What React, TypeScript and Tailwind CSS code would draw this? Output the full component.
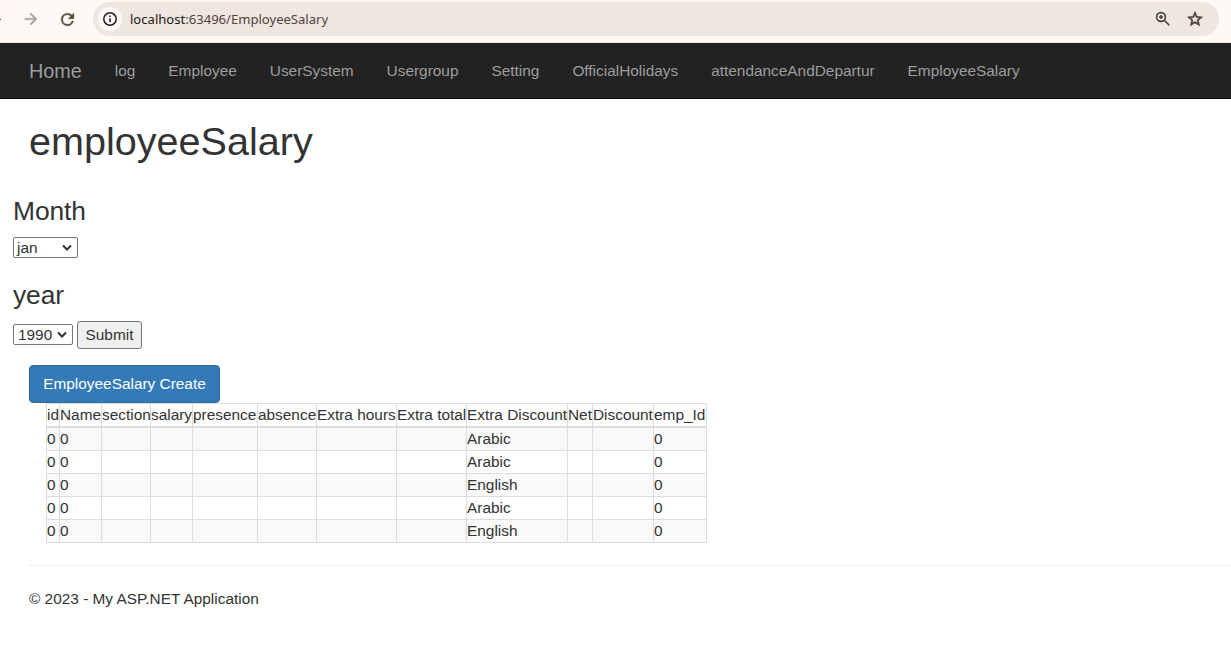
import React from 'react';

const navItems = [
  'log',
  'Employee',
  'UserSystem',
  'Usergroup',
  'Setting',
  'OfficialHolidays',
  'attendanceAndDepartur',
  'EmployeeSalary',
];

const columns = [
  { name: 'id', width: 13 },
  { name: 'Name', width: 42 },
  { name: 'section', width: 49 },
  { name: 'salary', width: 42 },
  { name: 'presence', width: 65 },
  { name: 'absence', width: 59 },
  { name: 'Extra hours', width: 80 },
  { name: 'Extra total', width: 70 },
  { name: 'Extra Discount', width: 101 },
  { name: 'Net', width: 25 },
  { name: 'Discount', width: 61 },
  { name: 'emp_Id', width: 53 },
];

const sections = ['Arabic', 'Arabic', 'English', 'Arabic', 'English'];
const rows = sections.map((s) => ['0', '0', '', '', '', '', '', '', s, '', '', '0']);

function BrowserBar() {
  return (
    <div className="flex h-[43px] items-start border-b border-[#efe3cb] bg-[#fff8f5] pt-[2px]">
      <div className="flex h-[34px] w-[93px] shrink-0 items-center">
        <div className="h-px w-px bg-[#4d3a28]" />
        <svg className="ml-[21px] h-[18px] w-[18px]" viewBox="0 0 24 24" fill="#aaa5a2">
          <path stroke="#aaa5a2" strokeWidth=".8" d="m12 4-1.41 1.41L16.17 11H4v2h12.17l-5.58 5.59L12 20l8-8z" />
        </svg>
        <svg className="ml-[18px] h-[19px] w-[19px]" viewBox="0 0 24 24" fill="#54432f">
          <path stroke="#54432f" strokeWidth=".5" d="M17.65 6.35A7.95 7.95 0 0 0 12 4a8 8 0 1 0 7.73 10h-2.08A6 6 0 1 1 12 6c1.66 0 3.14.69 4.22 1.78L13 11h7V4z" />
        </svg>
      </div>
      <div className="flex h-[34px] w-[1126px] items-center rounded-full bg-[#efe6e2] pl-[5px]">
        <div className="flex h-6 w-6 items-center justify-center rounded-full bg-[#fff8f5]">
          <svg className="h-4 w-4" viewBox="0 0 16 16" fill="none" stroke="#241c18" strokeWidth="1.5">
            <circle cx="8" cy="8" r="6.2" />
            <path d="M8 7.2v4M8 4.5v1.6" />
          </svg>
        </div>
        <div className="ml-2 w-[1016px] font-['Noto_Sans','Open_Sans',sans-serif] text-[13px] leading-5 text-[#51443c]">
          <span className="inline-block origin-left scale-x-[1.005] whitespace-nowrap">
            <span className="text-[#211a16]">localhost</span>:63496/EmployeeSalary
          </span>
        </div>
        <svg className="ml-[8px] h-[18px] w-[18px]" viewBox="0 0 18 18" fill="none" stroke="#4d4039" strokeWidth="1.6">
          <circle cx="7" cy="7" r="4.4" />
          <path d="m10.3 10.3 5 5M7 5v4M5 7h4" />
        </svg>
        <svg className="ml-[14px] h-[18px] w-[18px]" viewBox="0 0 24 24" fill="#4d4039">
          <path stroke="#4d4039" strokeWidth=".8" d="m22 9.24-7.19-.62L12 2 9.19 8.63 2 9.24l5.46 4.73L5.82 21 12 17.27 18.18 21l-1.63-7.03zM12 15.4l-3.76 2.27 1-4.28-3.32-2.88 4.38-.38L12 6.1l1.71 4.04 4.38.38-3.32 2.88 1 4.28z" />
        </svg>
      </div>
    </div>
  );
}

function SelectBox({ value, className }: { value: string; className: string }) {
  return (
    <div className={`flex h-[21px] items-center justify-between rounded-[2px] border border-[#767676] bg-white pr-[5px] ${className}`}>
      <span className="leading-[19px]">{value}</span>
      <svg className="h-[10px] w-[10px]" viewBox="0 0 10 10" fill="none" stroke="#333" strokeWidth="2">
        <path d="m1 2.5 4 4 4-4" />
      </svg>
    </div>
  );
}

export default function App() {
  return (
    <div className="h-[646px] w-[1231px] overflow-hidden bg-white font-['Liberation_Sans',Arial,sans-serif] text-[15.4px] leading-[22px] text-[#333]">
      <BrowserBar />
      <nav className="flex h-14 items-center border-b border-[#080808] bg-[#222] pl-[29px] text-[#9d9d9d]">
        <a className="mr-[33px] text-[19.8px]">Home</a>
        <div className="flex gap-[33px]">
          {navItems.map((item) => (
            <a key={item}>{item}</a>
          ))}
        </div>
      </nav>

      <h1 className="mt-[20px] ml-[29px] text-[39.6px] leading-[44px]">employeeSalary</h1>

      <form className="ml-[13px] pt-[33px]">
        <h3 className="text-[26.4px] leading-[30px] tracking-[-0.1px]">Month</h3>
        <SelectBox value="jan" className="mt-[11px] w-[65px] pl-[3px]" />
        <h3 className="mt-[22px] text-[26.4px] leading-[30px] tracking-[-0.1px]">year</h3>
        <div className="mt-[11px] flex items-start gap-1">
          <SelectBox value="1990" className="mt-[3px] w-[60px] pl-1" />
          <button type="button" className="h-7 w-[65px] rounded-[3px] border border-[#767676] bg-[#efefef] leading-[22px]">
            Submit
          </button>
        </div>
      </form>

      <main className="ml-[29px] pt-4">
        <a className="flex h-[38px] w-[191px] items-center justify-center rounded-[4px] border border-[#2e6da4] bg-[#337ab7] text-white">
          EmployeeSalary Create
        </a>
        <table className="ml-[17px] w-[661px] table-fixed border-separate border-spacing-0 border-t border-l border-[#ddd]">
          <colgroup>
            {columns.map((c) => (
              <col key={c.name} style={{ width: c.width }} />
            ))}
          </colgroup>
          <thead>
            <tr>
              {columns.map((c) => (
                <td key={c.name} className="h-6 border-r border-b-2 border-[#ddd] p-0 whitespace-nowrap">
                  {c.name}
                </td>
              ))}
            </tr>
          </thead>
          <tbody>
            {rows.map((row, i) => (
              <tr key={i} className="odd:bg-[#f9f9f9]">
                {row.map((cell, j) => (
                  <td key={j} className="h-[23px] border-r border-b border-[#ddd] p-0">
                    {cell}
                  </td>
                ))}
              </tr>
            ))}
          </tbody>
        </table>
        <hr className="mt-[22px] border-t border-[#eee]" />
        <footer className="pt-[22px]">© 2023 - My ASP.NET Application</footer>
      </main>
    </div>
  );
}
